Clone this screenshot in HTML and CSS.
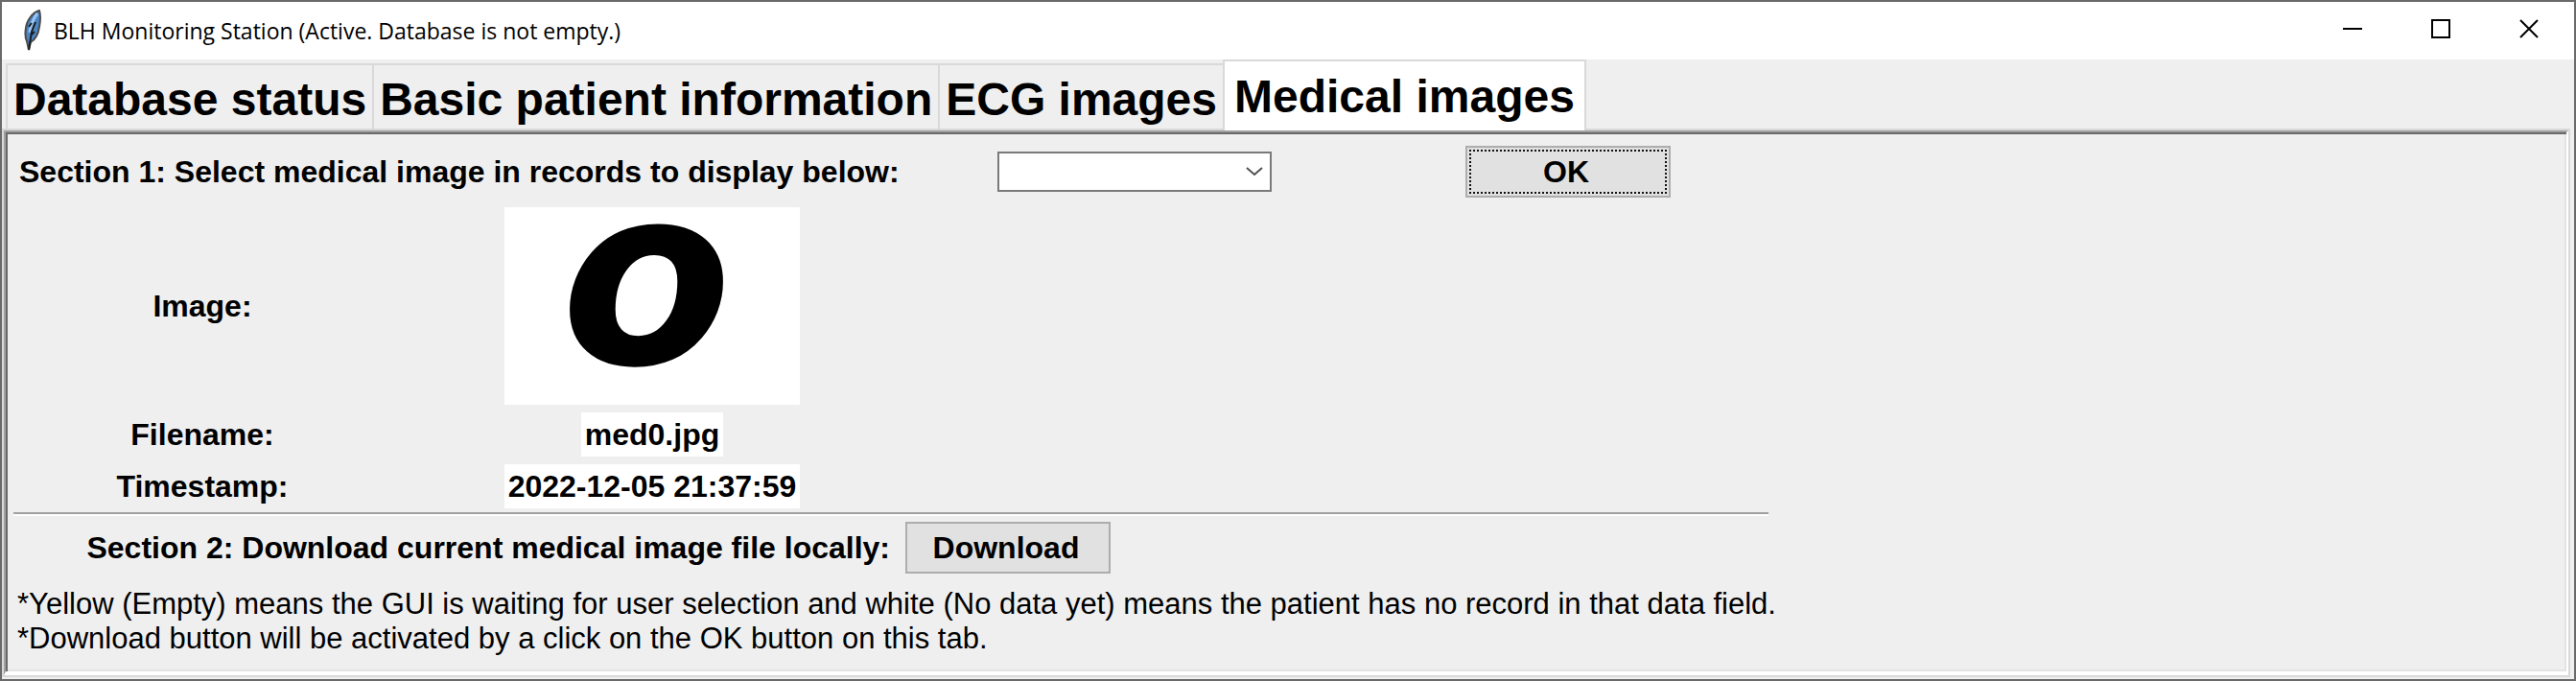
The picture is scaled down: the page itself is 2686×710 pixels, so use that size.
FILE: index.html
```html
<!DOCTYPE html>
<html lang="en">
<head>
<meta charset="utf-8">
<title>BLH Monitoring Station</title>
<link rel="stylesheet" href="styles.css">
</head>
<body>
<div class="window">
  <header class="titlebar">
    <svg class="feather" viewBox="0 0 20 44" aria-hidden="true">
      <path d="M17 1C10 3 4 11 3 19c-1 6-1 10 1 14l2 9 2-8c5-3 8-9 9-16 1-6 2-11 0-17z" fill="#4a86c8" stroke="#4b4b4b" stroke-width="2"/>
      <path d="M15 4c-4 5-7 12-8 20" fill="none" stroke="#9cc6f2" stroke-width="3"/>
      <path d="M13 13l-4 10-3 19M6 18l3-4M8 27l4-4" fill="none" stroke="#1d1d1d" stroke-width="2"/>
    </svg>
    <h1 class="title">BLH Monitoring Station (Active. Database is not empty.)</h1>
    <button class="control" aria-label="Minimize"><svg viewBox="0 0 20 20"><path d="M0 10h20"/></svg></button>
    <button class="control" aria-label="Maximize"><svg viewBox="0 0 20 20"><path d="M1 1h18v18H1z"/></svg></button>
    <button class="control" aria-label="Close"><svg viewBox="0 0 20 20"><path d="M1 1l18 18M19 1L1 19"/></svg></button>
  </header>
  <nav class="tabs" role="tablist">
    <button class="tab" role="tab">Database status</button>
    <button class="tab" role="tab">Basic patient information</button>
    <button class="tab" role="tab">ECG images</button>
    <button class="tab active" role="tab" aria-selected="true">Medical images</button>
  </nav>
  <main class="panel">
    <div class="content">
      <section class="grid chooser">
        <label class="wide" for="record">Section 1: Select medical image in records to display below:</label>
        <div class="cell picker">
          <select id="record"></select>
          <svg class="chevron" viewBox="0 0 18 10" aria-hidden="true"><path d="M1 1l8 7 8-7"/></svg>
        </div>
        <div class="cell"><button class="button focused">OK</button></div>
      </section>
      <section class="grid">
        <div class="cell">Image:</div>
        <div class="cell value"><div class="picture">o</div></div>
      </section>
      <section class="grid">
        <div class="cell">Filename:</div>
        <div class="cell value"><output class="field">med0.jpg</output></div>
      </section>
      <section class="grid">
        <div class="cell">Timestamp:</div>
        <div class="cell value"><output class="field">2022-12-05 21:37:59</output></div>
      </section>
      <hr class="rule">
      <section class="grid">
        <div class="wide end">Section 2: Download current medical image file locally:</div>
        <div class="cell start"><button class="button">Download</button></div>
      </section>
      <p class="notes">*Yellow (Empty) means the GUI is waiting for user selection and white (No data yet) means the patient has no record in that data field.<br>*Download button will be activated by a click on the OK button on this tab.</p>
    </div>
  </main>
</div>
</body>
</html>
```
FILE: styles.css
```css
* { box-sizing: border-box; }
body {
  margin: 0;
  color: #000;
  font-family: "Liberation Sans", Arial, sans-serif;
}
button, select { font: inherit; color: inherit; }
.window {
  display: flex;
  flex-direction: column;
  min-height: 100vh;
  border: 2px solid #6a6a6a;
  background: #efefef;
}
.titlebar {
  display: flex;
  align-items: center;
  height: 60px;
  padding-left: 22px;
  background: #fff;
}
.feather { width: 20px; height: 44px; }
.title {
  flex: 1;
  margin: 0;
  padding: 0 0 0 12px;
  font: 400 23px/32px "Open Sans", "Noto Sans", sans-serif;
}
.control {
  display: grid;
  place-items: center;
  width: 92px;
  height: 60px;
  padding: 0 2px 4px 0;
  border: 0;
  background: none;
}
.control svg { width: 20px; height: 20px; fill: none; stroke: #000; stroke-width: 2; }
.tabs {
  display: flex;
  align-items: flex-end;
  height: 72px;
  padding-left: 4px;
}
.tab {
  height: 68px;
  padding: 4px 6px 0;
  border: 2px solid #d9d9d9;
  border-right-width: 0;
  border-bottom: 0;
  background: #efefef;
  font-size: 48px;
  font-weight: 700;
  white-space: nowrap;
}
.tab.active {
  z-index: 1;
  height: 74px;
  margin-bottom: -2px;
  padding: 0 10px;
  border-right-width: 2px;
  background: #fff;
}
.panel {
  flex: 1;
  display: flex;
  margin: 0 4px 2px 0;
  border: 2px solid #d9d9d9;
}
.content {
  flex: 1;
  padding: 14px 8px 0;
  border: 2px solid;
  border-color: #a0a0a0 #fff #fff #a0a0a0;
  border-bottom-width: 4px;
  box-shadow: inset 2px 2px #696969, inset -2px -2px #e3e3e3;
  font-size: 32px;
  font-weight: 700;
  line-height: 46px;
}
.grid {
  display: grid;
  grid-template-columns: 394fr 528fr 494fr 410fr;
  align-items: center;
  max-width: 1830px;
  margin-bottom: 8px;
  padding-right: 4px;
}
.chooser { margin-bottom: 10px; }
.cell { display: flex; justify-content: center; }
.value { padding-left: 16px; }
.start { justify-content: flex-start; padding-left: 8px; }
.wide { grid-column: span 2; padding-left: 6px; white-space: nowrap; }
.end { padding-right: 8px; text-align: right; }
.picker { position: relative; width: 286px; justify-self: center; }
.picker select {
  width: 100%;
  height: 42px;
  border: 2px solid #7a7a7a;
  border-radius: 0;
  background: #fff;
  appearance: none;
}
.chevron {
  position: absolute;
  top: 16px;
  right: 9px;
  width: 18px;
  height: 10px;
  fill: none;
  stroke: #505050;
  stroke-width: 2;
  pointer-events: none;
}
.button {
  width: 214px;
  height: 54px;
  padding: 0 4px 0 0;
  border: 2px solid #adadad;
  background: #e1e1e1;
}
.button.focused { outline: 2px dotted #111; outline-offset: -6px; }
.picture {
  width: 308px;
  height: 206px;
  padding-right: 12px;
  overflow: hidden;
  background: #fff;
  font: italic 700 260px/146px "DejaVu Sans", sans-serif;
  text-align: center;
}
.field { padding: 0 4px; background: #fff; }
.rule {
  max-width: 1830px;
  height: 4px;
  margin: -4px 0 6px;
  border: 0;
  border-top: 2px solid #a0a0a0;
  border-bottom: 2px solid #fff;
}
.notes { margin: 14px 0 0 4px; font-size: 31px; font-weight: 400; line-height: 36px; }
```
